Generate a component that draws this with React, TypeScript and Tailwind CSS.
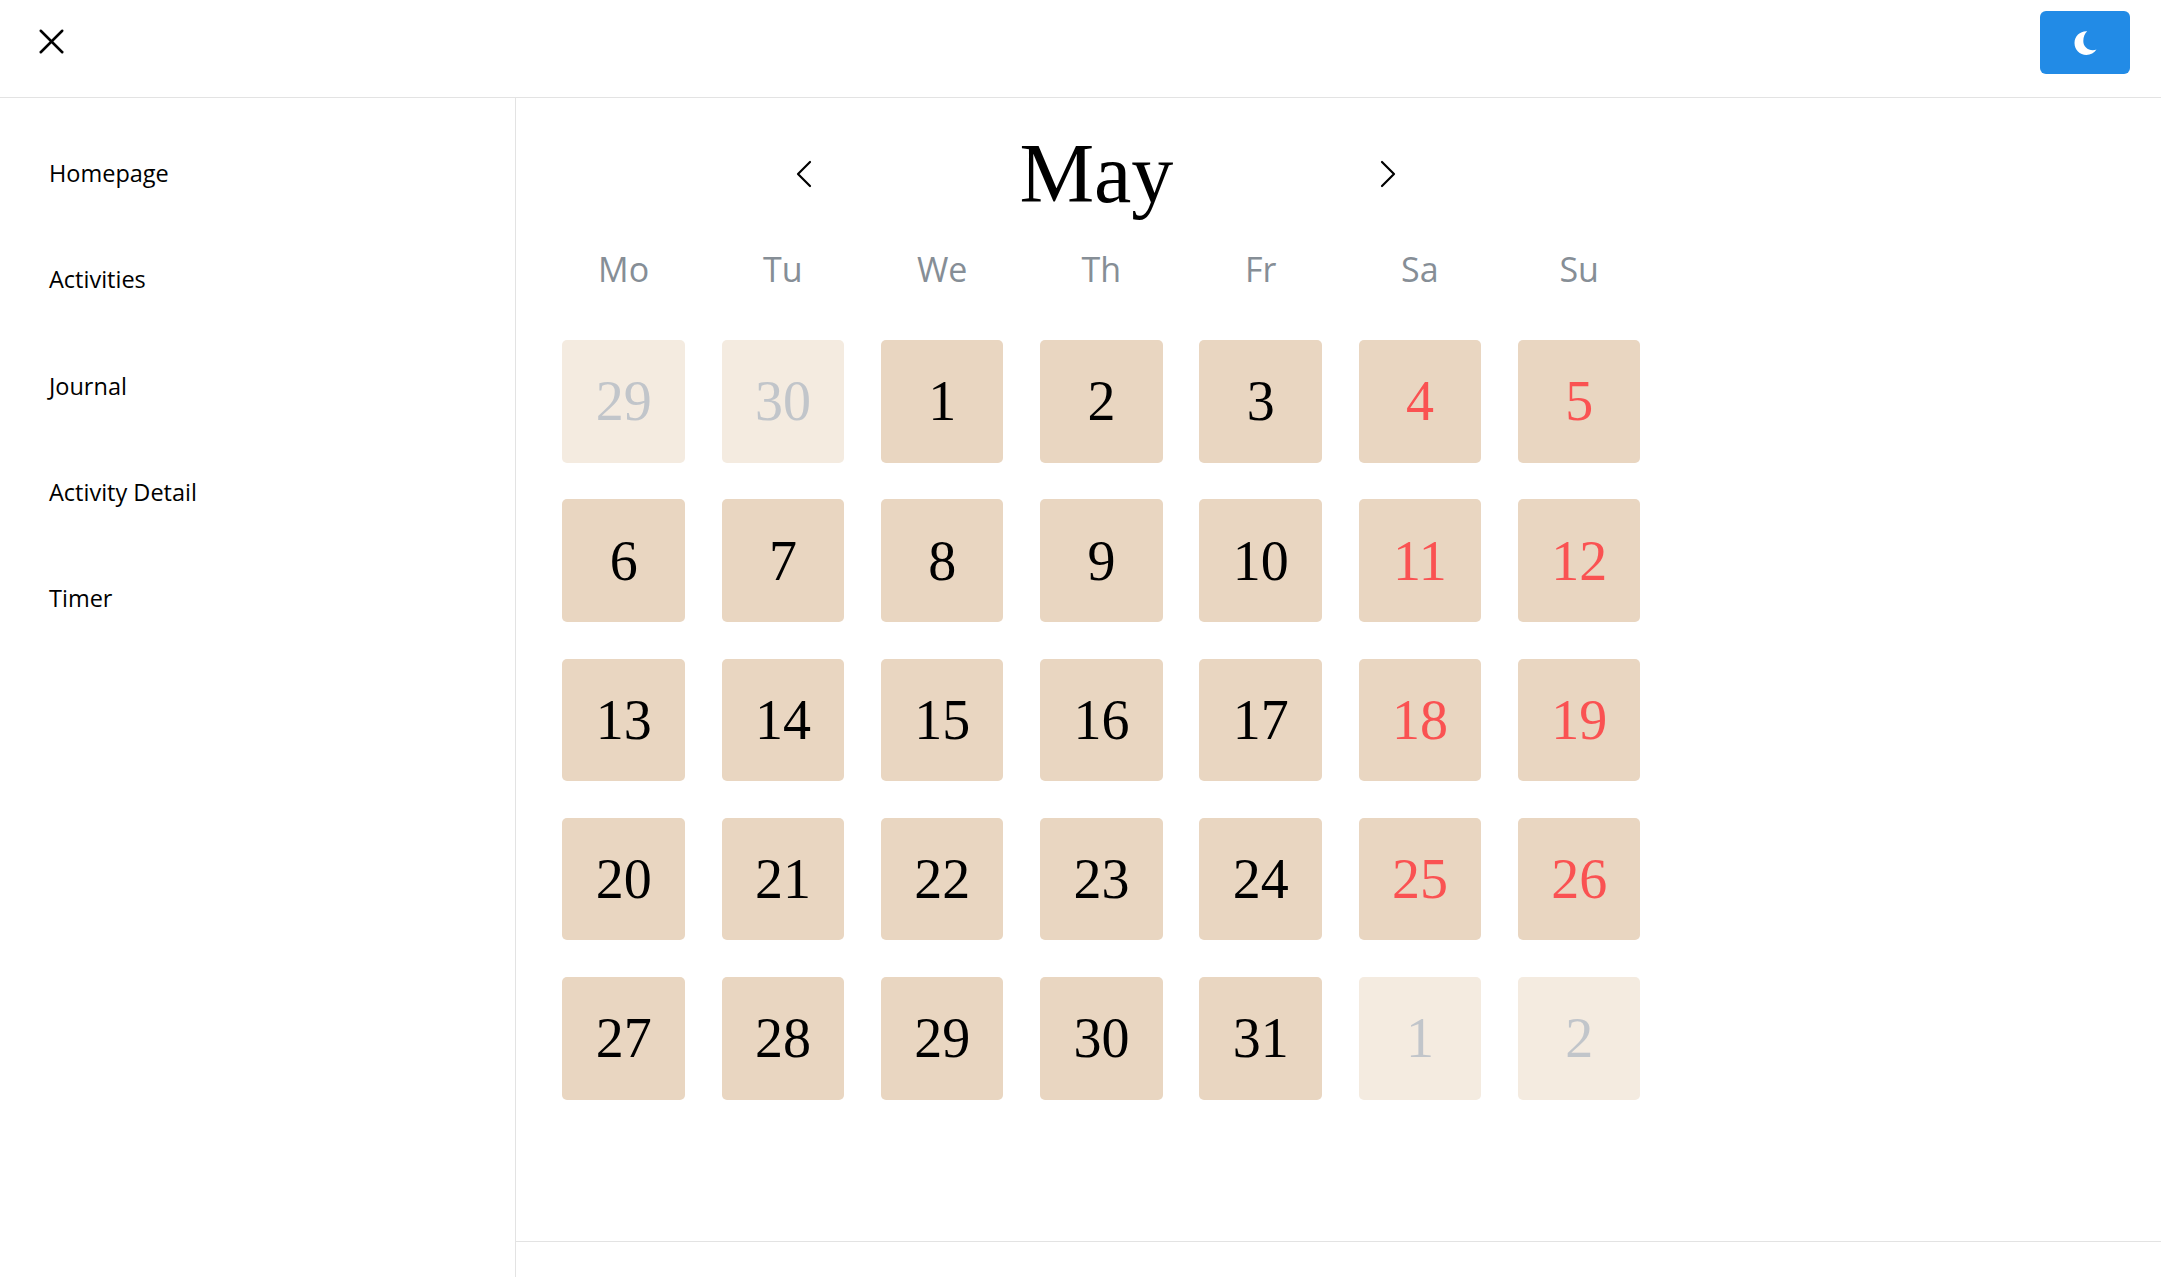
import React from 'react'
import { X, ChevronLeft, ChevronRight } from 'lucide-react'

const navItems = ['Homepage', 'Activities', 'Journal', 'Activity Detail', 'Timer']
const weekDays = ['Mo', 'Tu', 'We', 'Th', 'Fr', 'Sa', 'Su']

type Day = { n: number; muted?: boolean }

const days: Day[] = [
  { n: 29, muted: true },
  { n: 30, muted: true },
  ...Array.from({ length: 31 }, (_, i) => ({ n: i + 1 })),
  { n: 1, muted: true },
  { n: 2, muted: true },
]

function DayCell({ day, weekend }: { day: Day; weekend: boolean }) {
  const bg = day.muted ? 'bg-[#f4ebe0]' : 'bg-[#e9d6c1]'
  const color = day.muted ? 'text-[#c1c5ca]' : weekend ? 'text-[#fa5252]' : 'text-black'
  return (
    <div className={`flex h-[122.5px] items-center justify-center rounded-[5px] text-[56px] ${bg} ${color}`}>
      {day.n}
    </div>
  )
}

export default function App() {
  return (
    <div className="flex h-[1277px] w-full flex-col overflow-hidden bg-white font-['Liberation_Serif',serif] text-black">
      <header className="flex h-[98px] shrink-0 items-center justify-between border-b border-[#e3e3e3] pl-[29.5px] pr-[31px]">
        <X size={43} strokeWidth={1.4} className="mb-[14px]" />
        <button className="mb-[12px] flex h-[63px] w-[90px] items-center justify-center rounded-[6px] bg-[#228be6]">
          <svg width="24" height="24" viewBox="0 0 24 24" fill="#fff" className="ml-[1px]">
            <path d="M13.2 0.3C6.6 -0.3 0.5 4.9 0.5 12c0 6.6 5.3 12 11.9 12 4.2 0 7.9-2.2 10.1-5.5-1 .5-2.3.7-3.6.7-5.5 0-9.6-4.1-9.6-9.3 0-4.2 1.6-7.5 3.9-9.6z" />
          </svg>
        </button>
      </header>

      <div className="flex min-h-0 flex-1">
        <nav className="w-[516px] shrink-0 border-r border-[#e3e3e3] pl-[49px] pt-[59px] font-['Open_Sans',sans-serif] text-[23.5px] leading-[33px]">
          <ul className="flex flex-col gap-[73.3px]">
            {navItems.map((item) => (
              <li key={item}>{item}</li>
            ))}
          </ul>
        </nav>

        <main className="flex min-w-0 flex-1 flex-col">
          <div className="h-[1144px] border-b border-[#e3e3e3] pl-[46.4px]">
            <div className="w-[1078px]">
              <div className="flex h-[148px] items-center pl-[218px] pt-[3px]">
                <ChevronLeft size={48} strokeWidth={1.1} className="shrink-0" />
                <div className="w-[536px] text-center text-[84px] leading-none">May</div>
                <ChevronRight size={48} strokeWidth={1.1} className="shrink-0" />
              </div>
              <div className="grid grid-cols-7 gap-x-[36.75px] font-['Open_Sans',sans-serif] text-[34px] leading-[46px] text-[#868e96]">
                {weekDays.map((d) => (
                  <div key={d} className="text-center">
                    {d}
                  </div>
                ))}
              </div>
              <div className="mt-[48px] grid grid-cols-7 gap-x-[36.75px] gap-y-[36.75px]">
                {days.map((day, i) => (
                  <DayCell key={i} day={day} weekend={i % 7 > 4} />
                ))}
              </div>
            </div>
          </div>
        </main>
      </div>
    </div>
  )
}
